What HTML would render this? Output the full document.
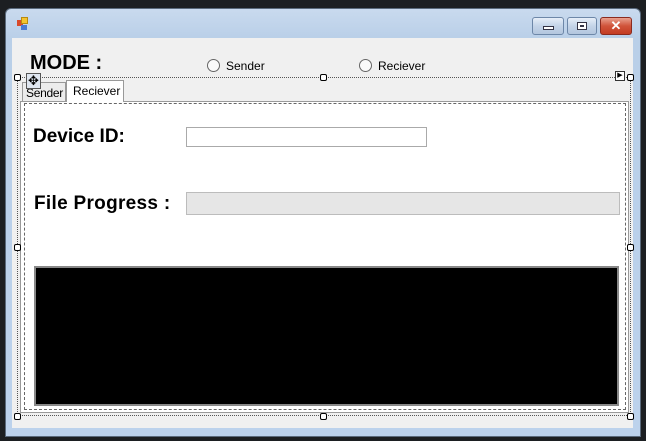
<!DOCTYPE html>
<html><head><style>
*{margin:0;padding:0;box-sizing:border-box}
body{width:646px;height:441px;background:#1c1f22;position:relative;overflow:hidden;font-family:"Liberation Sans",sans-serif}
.a{position:absolute}
.h{position:absolute;width:7px;height:7px;border:1px solid #000;background:#fff;border-radius:2px}
.btn{position:absolute;top:17px;height:18px;border:1px solid #6d87a8;border-radius:3px;background:linear-gradient(#e6eef8,#c4d4e8 50%,#b3c6de)}
</style></head><body>
<div class="a" style="left:5px;top:8px;width:636px;height:429px;border-radius:6px 6px 0 0;background:linear-gradient(#c9daee,#b9cfe8 30px,#bcd2ec);border:1px solid #5a6a7c"></div>
<div class="a" style="left:17px;top:20px;width:6px;height:6px;background:#d94a2a"></div>
<div class="a" style="left:21px;top:17px;width:7px;height:7px;background:#f4c430;border:1px solid #b88a10"></div>
<div class="a" style="left:21px;top:25px;width:6px;height:5px;background:#4a7ad4"></div>
<div class="btn" style="left:532px;width:32px"><div class="a" style="left:10px;top:8px;width:11px;height:4px;border:1px solid #334;background:#fff"></div></div>
<div class="btn" style="left:567px;width:30px"><div class="a" style="left:9px;top:4px;width:10px;height:8px;border:1px solid #334;background:#fff"><div class="a" style="left:2px;top:2px;width:4px;height:2px;border:1px solid #334"></div></div></div>
<div class="btn" style="left:600px;width:32px;border-color:#8a2a1e;background:linear-gradient(#e9a18f,#d0533a 50%,#c33c22);color:#fff;font-weight:bold;font-size:13px;text-align:center;line-height:16px">✕</div>
<div class="a" style="left:12px;top:38px;width:621px;height:390px;background:#f0f0f0"></div>
<div class="a" style="left:30px;top:52px;font-size:20px;font-weight:bold;color:#000">MODE :</div>
<div class="a" style="left:207px;top:59px;width:13px;height:13px;border:1px solid #666;border-radius:50%;background:#fafafa"></div>
<div class="a" style="left:226px;top:59px;font-size:12px">Sender</div>
<div class="a" style="left:359px;top:59px;width:13px;height:13px;border:1px solid #666;border-radius:50%;background:#fafafa"></div>
<div class="a" style="left:378px;top:59px;font-size:12px">Reciever</div>
<div class="a" style="left:17px;top:77px;width:614px;height:339px;border:1px dotted #555"></div>
<div class="a" style="left:22px;top:82px;width:44px;height:19px;border:1px solid #999;border-bottom:none;background:#ececec;font-size:12px;padding:3px 0 0 3px;letter-spacing:-0.3px">Sender</div>
<div class="a" style="left:66px;top:80px;width:58px;height:22px;border:1px solid #999;border-bottom:none;background:#fff;font-size:12px;padding:3px 0 0 6px;z-index:2">Reciever</div>
<div class="a" style="left:20px;top:101px;width:609px;height:312px;border:1px solid #999;background:#fff"></div>
<div class="a" style="left:24px;top:103px;width:602px;height:307px;border:1px dashed #666"></div>
<div class="a" style="left:33px;top:126px;font-size:19px;font-weight:bold">Device ID:</div>
<div class="a" style="left:186px;top:127px;width:241px;height:20px;border:1px solid #aaa;background:#fff"></div>
<div class="a" style="left:34px;top:193px;font-size:19px;font-weight:bold;letter-spacing:0.3px">File Progress :</div>
<div class="a" style="left:186px;top:192px;width:434px;height:23px;border:1px solid #bcbcbc;background:#e6e6e6"></div>
<div class="a" style="left:34px;top:266px;width:585px;height:140px;border:2px solid #888;background:#000"></div>
<div class="a" style="left:26px;top:73px;width:15px;height:16px;border:1px solid #555;background:#dfe6f0;font-size:13px;text-align:center;line-height:14px">✥</div>
<div class="a" style="left:615px;top:71px;width:10px;height:10px;border:1px solid #333;background:#fff;font-size:7px;line-height:8px;text-align:center">▶</div>
<div class="h" style="left:14px;top:74px"></div>
<div class="h" style="left:320px;top:74px"></div>
<div class="h" style="left:627px;top:74px"></div>
<div class="h" style="left:14px;top:244px"></div>
<div class="h" style="left:627px;top:244px"></div>
<div class="h" style="left:14px;top:413px"></div>
<div class="h" style="left:320px;top:413px"></div>
<div class="h" style="left:627px;top:413px"></div>
</body></html>
